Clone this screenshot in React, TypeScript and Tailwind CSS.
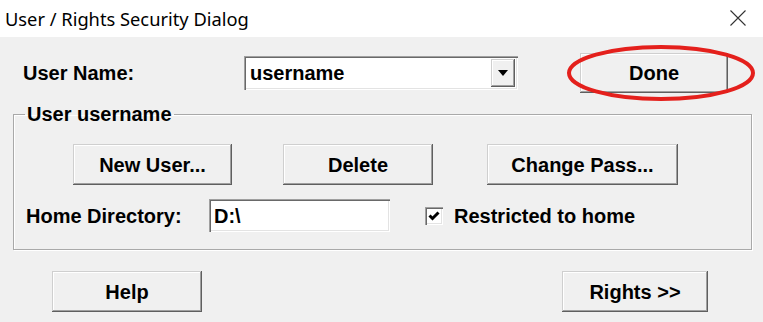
const raised =
  "shadow-[inset_-1px_-1px_#5f5f5f,inset_1px_1px_#cfcfcf,inset_-2px_-2px_#a0a0a0,inset_2px_2px_#ffffff]";
const sunken =
  "shadow-[inset_1px_1px_#a0a0a0,inset_2px_2px_#696969,inset_-1px_-1px_#ffffff,inset_-2px_-2px_#e3e3e3]";

function Btn({ label, w }: { label: string; w: string }) {
  return (
    <div
      className={`flex h-[41px] items-center justify-center bg-[#f0f0f0] text-[20px] font-bold text-black ${w} ${raised}`}
    >
      {label}
    </div>
  );
}

export default function App() {
  return (
    <div className="flex h-[322px] w-[763px] flex-col overflow-hidden bg-white font-['Liberation_Sans',Arial,sans-serif]">
      {/* TITLE BAR */}
      <div className="flex h-[37px] shrink-0 items-center justify-between pl-[5px] pr-[17px]">
        <span className="font-['Noto_Sans',sans-serif] text-[18.3px] text-black">
          User / Rights Security Dialog
        </span>
        <svg width="16" height="16" viewBox="0 0 16 16" className="-mt-[2px]">
          <path d="M0.5 0.5 L15.5 15.5 M15.5 0.5 L0.5 15.5" stroke="#333" strokeWidth="1.1" />
        </svg>
      </div>

      {/* BODY */}
      <div className="flex flex-1 flex-col bg-[#f0f0f0]">
        {/* USER NAME ROW */}
        <div className="mt-[16px] flex h-[40px] items-center pl-[23px]">
          <span className="w-[221px] text-[20px] font-bold text-black">User Name:</span>
          <div className={`flex h-[34px] w-[274px] items-center bg-white pl-[6px] ${sunken}`}>
            <span className="text-[20px] font-bold text-black">username</span>
            <div
              className={`ml-auto mr-[3px] flex h-[28px] w-[24px] items-center justify-center bg-[#f0f0f0] ${raised}`}
            >
              <svg width="10" height="6" viewBox="0 0 10 6">
                <path d="M0 0 H10 L5 6 Z" fill="#000" />
              </svg>
            </div>
          </div>
          <div className="relative ml-[62px]">
            <div
              className={`flex h-[40px] w-[148px] items-center justify-center bg-[#f0f0f0] text-[20px] font-bold text-black ${raised}`}
            >
              Done
            </div>
            <svg
              width="190"
              height="58"
              viewBox="0 0 190 58"
              className="pointer-events-none absolute -left-[14px] -top-[9px]"
            >
              <ellipse cx="95" cy="29" rx="92" ry="26" fill="none" stroke="#e4201c" strokeWidth="4" />
            </svg>
          </div>
        </div>

        {/* GROUP BOX */}
        <fieldset className="ml-[13px] mt-[10px] w-[739px] border border-[#a9a9a9] pb-[17px] pl-[12px] shadow-[inset_1px_1px_#ffffff,1px_1px_#ffffff]">
          <legend className="-ml-[1px] px-[2px] text-[20px] font-bold leading-[23px] text-black">
            User username
          </legend>
          <div className="mt-[18px] flex pl-[47px]">
            <Btn label="New User..." w="w-[159px]" />
            <div className="ml-[51px]">
              <Btn label="Delete" w="w-[150px]" />
            </div>
            <div className="ml-[54px]">
              <Btn label="Change Pass..." w="w-[191px]" />
            </div>
          </div>
          <div className="mt-[14px] flex h-[33px] items-center">
            <span className="w-[183px] text-[20px] font-bold text-black">Home Directory:</span>
            <div className={`flex h-[33px] w-[181px] items-center bg-white pl-[5px] ${sunken}`}>
              <span className="text-[20px] font-bold text-black">D:\</span>
            </div>
            <div className={`ml-[35px] flex h-[18px] w-[18px] items-center justify-center bg-white ${sunken}`}>
              <svg width="12" height="10" viewBox="0 0 12 10">
                <path d="M1.5 4.5 L4.5 7.5 L10.5 1.5" fill="none" stroke="#000" strokeWidth="3" />
              </svg>
            </div>
            <span className="ml-[11px] text-[20px] font-bold text-black">Restricted to home</span>
          </div>
        </fieldset>

        {/* BOTTOM ROW */}
        <div className="mt-[21px] flex pl-[52px]">
          <Btn label="Help" w="w-[150px]" />
          <div className="ml-[360px]">
            <Btn label="Rights >>" w="w-[146px]" />
          </div>
        </div>
      </div>
    </div>
  );
}
